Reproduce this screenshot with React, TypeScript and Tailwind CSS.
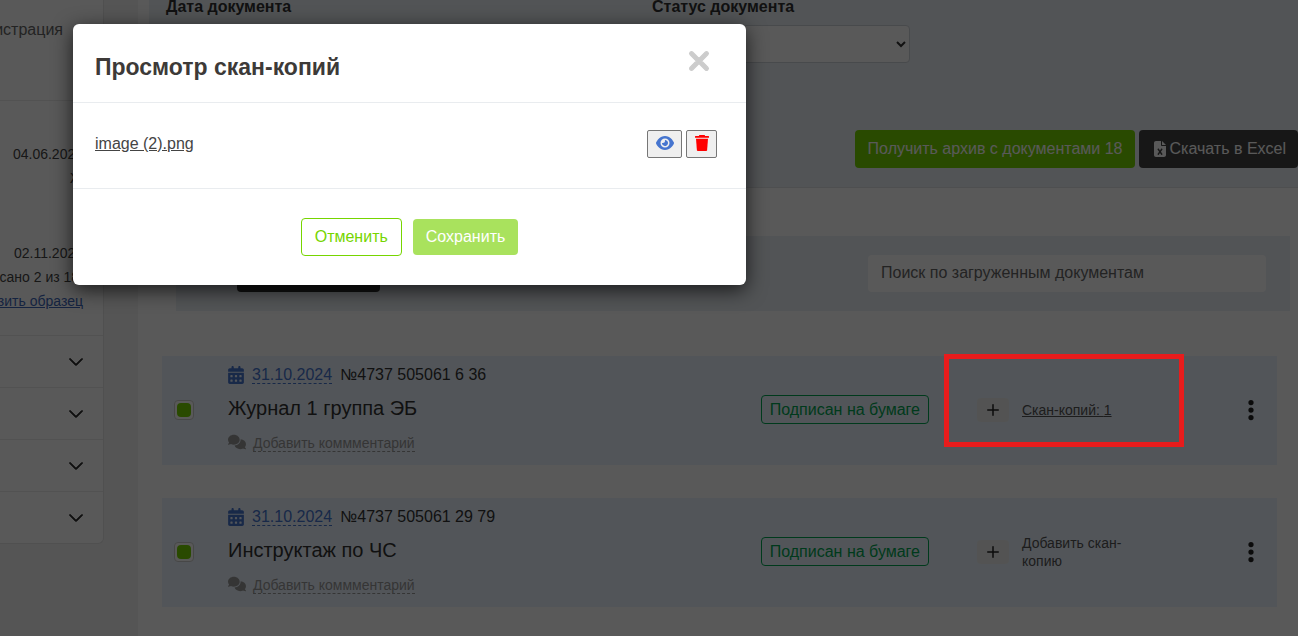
import React from 'react';
import { FaCalendarDays, FaComments, FaEllipsisVertical, FaEye, FaFileExcel, FaXmark } from 'react-icons/fa6';
import { BsChevronDown } from 'react-icons/bs';
import { FiPlus } from 'react-icons/fi';

interface DocumentItem {
  id: number;
  date: string;
  number: string;
  title: string;
  scans: number;
  highlighted?: boolean;
}

const documents: DocumentItem[] = [
  { id: 1, date: '31.10.2024', number: '№4737 505061 6 36', title: 'Журнал 1 группа ЭБ', scans: 1, highlighted: true },
  { id: 2, date: '31.10.2024', number: '№4737 505061 29 79', title: 'Инструктаж по ЧС', scans: 0 },
];

const sections = ['Профиль', 'Документы', 'Сотрудники', 'Настройки'];

const TrashIcon: React.FC = () => (
  <svg viewBox="0 0 14 16" className="h-4 w-3.5" fill="currentColor" aria-hidden="true">
    <path d="M4 0.6Q4 0 4.6 0H9.4Q10 0 10 0.6V1H13.5Q14 1 14 1.5V2.7H0V1.5Q0 1 0.5 1H4Z" />
    <path d="M1 3.8H13L12.1 15.2Q12 16 11.2 16H2.8Q2 16 1.9 15.2Z" />
  </svg>
);

const Sidebar: React.FC = () => (
  <aside className="w-[104px] shrink-0">
    <div className="overflow-hidden whitespace-nowrap rounded-br-md border-b border-r border-[#e4e4e4] bg-white">
      <div className="flex h-[101px] justify-end border-b border-[#eaeaea] pr-10 pt-[18px] text-base text-[#666]">
        Регистрация
      </div>
      <div className="flex h-[234px] flex-col items-end pr-5 pt-[41px] text-sm leading-6 text-[#444]">
        <span>04.06.2024</span>
        <span>Ж</span>
        <span className="mt-[51px]">02.11.2024</span>
        <span>Подписано 2 из 18:</span>
        <a href="#sample" className="text-[#3d66b8] underline">Отобразить образец</a>
      </div>
      {sections.map((name) => (
        <button
          key={name}
          aria-label={name}
          className="flex h-[52px] w-full items-center justify-end border-t border-[#eaeaea] pr-[19px]"
        >
          <BsChevronDown className="size-4 text-[#222]" strokeWidth={1} />
        </button>
      ))}
    </div>
  </aside>
);

const Filters: React.FC = () => (
  <section className="border-b border-[#dfe2e6] bg-[#ebf0f5] pb-[19px] pl-[17px]">
    <div className="flex gap-[228px]">
      <div className="w-[258px]">
        <label htmlFor="doc-date" className="block font-bold leading-[14px] text-[#333]">Дата документа</label>
        <input id="doc-date" className="mt-[11px] h-[38px] w-full rounded border border-[#ced4da] bg-white px-3" />
      </div>
      <div className="w-[258px]">
        <label htmlFor="doc-status" className="block font-bold leading-[14px] text-[#333]">Статус документа</label>
        <select id="doc-status" className="mt-[11px] h-[38px] w-full rounded border border-[#ced4da] bg-white px-3 text-[#333]">
          <option></option>
          <option>Подписан</option>
        </select>
      </div>
    </div>
    <div className="mt-[67px] flex justify-end gap-1 whitespace-nowrap">
      <button className="h-[38px] rounded bg-[#76d500] px-[13px] text-white">Получить архив с документами 18</button>
      <button className="flex h-[38px] items-center gap-0.5 rounded bg-[#444] pl-3.5 pr-3 text-white">
        <FaFileExcel className="h-4 w-3.5" />
        Скачать в Excel
      </button>
    </div>
  </section>
);

const Toolbar: React.FC = () => (
  <div className="ml-[27px] mr-2 mt-12 flex justify-between bg-[#ebf0f5] py-[19px] pl-[61px] pr-6">
    <button className="h-[37px] w-[143px] rounded bg-[#333] text-white">Загрузить</button>
    <input
      aria-label="Поиск по загруженным документам"
      placeholder="Поиск по загруженным документам"
      className="h-[37px] w-[398px] rounded bg-white px-[13px] pb-0.5 placeholder:text-[#666]"
    />
  </div>
);

const DocumentRow: React.FC<{ doc: DocumentItem }> = ({ doc }) => (
  <article className="relative flex h-[109px] items-center bg-[#ebf4ff] pb-0.5 pl-3 pr-5">
    <input
      type="checkbox"
      defaultChecked
      aria-label={doc.title}
      className="grid size-5 appearance-none place-items-center rounded border border-[#ccc] bg-white before:size-3.5 before:rounded before:bg-[#76d500]"
    />
    <div className="ml-[34px] flex-1">
      <div className="flex h-6 items-center text-[#333]">
        <FaCalendarDays className="mb-0.5 h-[18px] w-4 text-[#4675cf]" />
        <a href="#date" className="ml-2 border-b border-dashed border-[#4675cf] leading-4 text-[#4675cf]">{doc.date}</a>
        <span className="ml-2 self-start leading-[22px]">{doc.number}</span>
      </div>
      <h2 className="mt-1.5 text-xl leading-7 text-[#333]">{doc.title}</h2>
      <div className="mt-2.5 flex h-6 items-center text-sm text-[#999]">
        <FaComments className="mb-1 size-[18px]" />
        <a href="#comment" className="ml-[7px] border-b border-dashed border-[#999] leading-4">Добавить коммментарий</a>
      </div>
    </div>
    <span className="rounded border border-[#00a651] px-2 py-0.5 leading-[23px] text-[#00a651]">Подписан на бумаге</span>
    <div className="ml-12 flex w-[204px] items-center">
      <button aria-label="Добавить" className="flex h-6 w-8 items-center justify-center rounded bg-[#eee] text-[#222]">
        <FiPlus className="size-[18px]" />
      </button>
      {doc.scans > 0 ? (
        <a href="#scans" className="ml-[13px] text-sm text-[#555] underline">Скан-копий: {doc.scans}</a>
      ) : (
        <span className="ml-[13px] w-28 text-sm leading-[18px] text-[#555]">Добавить скан-копию</span>
      )}
    </div>
    <button aria-label="Действия" className="ml-16 text-[#222]">
      <FaEllipsisVertical className="h-6 w-3" />
    </button>
    {doc.highlighted && (
      <div className="pointer-events-none absolute -top-0.5 right-[93px] z-20 h-[93px] w-[240px] border-5 border-[#e81c1c]" />
    )}
  </article>
);

const ScanDialog: React.FC = () => (
  <div
    role="dialog"
    aria-labelledby="scan-title"
    className="absolute left-[73px] top-6 z-30 w-[673px] rounded-md bg-white shadow-[0_5px_20px_rgba(0,0,0,0.7)]"
  >
    <header className="flex h-[79px] items-start justify-between border-b border-[#e9ecef] pl-[22px] pr-8">
      <h1 id="scan-title" className="pt-7 text-[23px] font-bold leading-[30px] text-[#3d3a38]">Просмотр скан-копий</h1>
      <button aria-label="Закрыть" className="mt-[22px] text-[#ccc]">
        <FaXmark className="size-[30px]" strokeWidth={20} />
      </button>
    </header>
    <div className="flex h-[86px] items-center justify-between border-b border-[#e9ecef] pb-[3px] pl-[22px] pr-[29px]">
      <a href="#image" className="text-[#444] underline">image (2).png</a>
      <div className="flex gap-1">
        <button aria-label="Просмотреть" className="flex h-7 w-[35px] items-center justify-center rounded-xs border border-[#767676] bg-[#efefef] pb-0.5 text-[#4675cf]">
          <FaEye className="size-[18px]" />
        </button>
        <button aria-label="Удалить" className="flex h-7 w-[31px] items-center justify-center rounded-xs border border-[#767676] bg-[#efefef] pb-0.5 text-[#ff0000]">
          <TrashIcon />
        </button>
      </div>
    </div>
    <footer className="flex h-24 items-center justify-center gap-[11px]">
      <button className="h-[38px] rounded border border-[#76d500] px-[13px] text-[#76d500]">Отменить</button>
      <button className="h-9 rounded bg-[#a9e25d] px-[13px] text-white">Сохранить</button>
    </footer>
  </div>
);

export default function App() {
  return (
    <div className="relative min-h-screen overflow-hidden bg-[#f3f3f3] font-['Liberation_Sans',sans-serif] text-base">
      <div className="flex min-h-screen">
        <Sidebar />
        <main className="ml-[34px] min-w-0 flex-1 bg-white pl-[11px]">
          <Filters />
          <Toolbar />
          <div className="ml-[13px] mr-[21px] mt-[45px] flex flex-col gap-[33px]">
            {documents.map((doc) => (
              <DocumentRow key={doc.id} doc={doc} />
            ))}
          </div>
        </main>
      </div>
      <div className="absolute inset-0 z-10 bg-black/65" />
      <ScanDialog />
    </div>
  );
}
